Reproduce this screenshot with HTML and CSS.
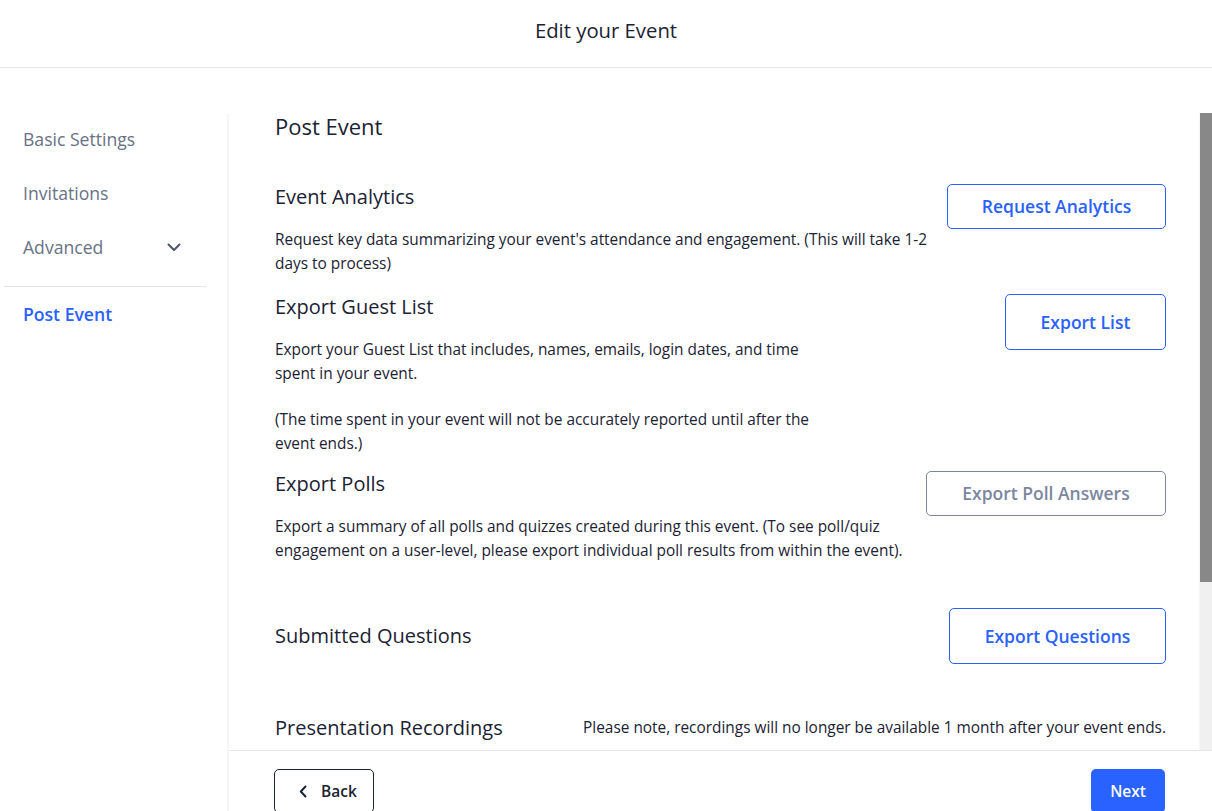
FILE: index.html
```html
<!DOCTYPE html>
<html lang="en">
<head>
<meta charset="utf-8">
<title>Edit your Event</title>
<link rel="stylesheet" href="styles.css">
</head>
<body>
<header class="topbar">
  <h1 class="topbar-title">Edit your Event</h1>
</header>
<div class="layout">
  <aside class="sidebar">
    <nav class="nav">
      <a class="nav-item">Basic Settings</a>
      <a class="nav-item">Invitations</a>
      <a class="nav-item nav-item-expand">Advanced
        <svg class="chev-down" width="14" height="9" viewBox="0 0 14 9"><polyline points="1.5,1.5 7,7 12.5,1.5" fill="none" stroke="#4b5468" stroke-width="2" stroke-linecap="round" stroke-linejoin="round"/></svg>
      </a>
      <div class="nav-divider"></div>
      <a class="nav-item nav-item-active">Post Event</a>
    </nav>
  </aside>
  <main class="main">
    <div class="scroll">
      <div class="scroll-content">
        <h2 class="page-title">Post Event</h2>

        <section class="row row-analytics">
          <div class="row-text">
            <h3 class="row-title">Event Analytics</h3>
            <p class="row-desc">Request key data summarizing your event's attendance and engagement. (This will take 1-2 days to process)</p>
          </div>
          <button class="btn btn-outline btn-short btn-analytics">Request Analytics</button>
        </section>

        <section class="row row-guests">
          <div class="row-text">
            <h3 class="row-title">Export Guest List</h3>
            <p class="row-desc narrow">Export your Guest List that includes, names, emails, login dates, and time spent in your event.</p>
            <p class="row-desc narrow gap">(The time spent in your event will not be accurately reported until after the event ends.)</p>
          </div>
          <button class="btn btn-outline btn-tall btn-list">Export List</button>
        </section>

        <section class="row row-polls">
          <div class="row-text">
            <h3 class="row-title">Export Polls</h3>
            <p class="row-desc">Export a summary of all polls and quizzes created during this event. (To see poll/quiz engagement on a user-level, please export individual poll results from within the event).</p>
          </div>
          <button class="btn btn-muted btn-short btn-polls">Export Poll Answers</button>
        </section>

        <section class="row row-center row-questions">
          <h3 class="row-title">Submitted Questions</h3>
          <button class="btn btn-outline btn-tall btn-questions">Export Questions</button>
        </section>

        <section class="row row-center row-recordings">
          <h3 class="row-title">Presentation Recordings</h3>
          <p class="note">Please note, recordings will no longer be available 1 month after your event ends.</p>
        </section>
      </div>
      <div class="scrollbar"><div class="scrollbar-thumb"></div></div>
    </div>
    <footer class="footer">
      <button class="btn btn-back">
        <svg class="chev-left" width="8" height="13" viewBox="0 0 8 13"><polyline points="6.5,1.5 1.8,6.5 6.5,11.5" fill="none" stroke="#1b2233" stroke-width="2" stroke-linecap="round" stroke-linejoin="round"/></svg>
        Back
      </button>
      <button class="btn btn-next">Next</button>
    </footer>
  </main>
</div>
</body>
</html>
```

FILE: styles.css
```css
* { box-sizing: border-box; }

html, body {
  margin: 0;
  padding: 0;
  height: 811px;
  overflow: hidden;
  background: #ffffff;
  font-family: "Open Sans", "Noto Sans", sans-serif;
  color: #1b2233;
}

.topbar {
  height: 68px;
  border-bottom: 1px solid #e4e4e4;
  display: flex;
  align-items: center;
  justify-content: center;
}

.topbar-title {
  margin: 0 0 8px 0;
  font-size: 20.3px;
  font-weight: 400;
  color: #1b2233;
}

.layout {
  display: flex;
  height: 743px;
}

.sidebar {
  width: 227px;
  flex-shrink: 0;
  padding-top: 44px;
}

.nav {
  margin-left: 4px;
  width: 202px;
  display: flex;
  flex-direction: column;
}

.nav-item {
  height: 54px;
  display: flex;
  align-items: center;
  justify-content: space-between;
  padding: 0 25px 0 19px;
  font-size: 17.6px;
  color: #687185;
}

.nav-divider {
  height: 1px;
  background: #e1e3e8;
  margin: 12px 0 0 0;
}

.nav-item-active {
  color: #2962ff;
  font-weight: 600;
}

.main {
  flex: 1;
  margin-top: 45px;
  border-left: 2px solid #f6f6f6;
  display: flex;
  flex-direction: column;
  min-width: 0;
}

.scroll {
  height: 637px;
  flex-shrink: 0;
  display: flex;
}

.scroll-content {
  flex: 1;
  min-width: 0;
  padding: 0 33px 0 46px;
  border-right: 1px solid #f7f7f7;
}

.scrollbar {
  width: 12px;
  flex-shrink: 0;
  background: #f0f0f0;
}

.scrollbar-thumb {
  height: 469px;
  background: #888888;
}

.page-title {
  margin: 0;
  font-size: 22px;
  line-height: 27px;
  font-weight: 400;
  color: #1b2233;
}

.row {
  display: flex;
  justify-content: space-between;
  align-items: flex-start;
  gap: 20px;
}

.row-center {
  align-items: center;
}

.row-analytics { margin-top: 44px; }
.row-guests { margin-top: 18px; }
.row-polls { margin-top: 15px; }
.row-questions { margin-top: 45px; }
.row-recordings { margin-top: 51px; }

.row-text {
  flex: 1;
  min-width: 0;
}

.row-title {
  margin: 0;
  font-size: 20px;
  line-height: 26px;
  font-weight: 400;
  color: #1b2233;
}

.row-desc {
  margin: 18px 0 0 0;
  font-size: 15.4px;
  line-height: 24px;
  color: #1b2233;
}

.row-desc.narrow { max-width: 560px; }
.row-desc.gap { margin-top: 22px; }

.note {
  margin: 0;
  font-size: 15.4px;
  line-height: 24px;
  color: #1b2233;
}

.btn {
  font-family: "Open Sans", "Noto Sans", sans-serif;
  font-size: 17.5px;
  font-weight: 600;
  border-radius: 5px;
  background: #ffffff;
  flex-shrink: 0;
  cursor: pointer;
  padding-bottom: 2px;
}

.btn-outline {
  border: 1px solid #2962ff;
  color: #2962ff;
}

.btn-muted {
  border: 1px solid #7c869f;
  color: #7c869f;
}

.btn-short { height: 45px; }
.btn-tall { height: 56px; }

.btn-analytics { width: 219px; }
.btn-list { width: 161px; }
.btn-polls { width: 240px; }
.btn-questions { width: 217px; }

.footer {
  border-top: 1px solid #e8e8e8;
  padding: 18px 47px 18px 45px;
  display: flex;
  justify-content: space-between;
  align-items: flex-start;
}

.btn-back {
  width: 100px;
  height: 44px;
  border: 1px solid #1b2233;
  color: #1b2233;
  display: flex;
  align-items: center;
  justify-content: center;
  gap: 14px;
  font-size: 15.5px;
  padding: 0 0 0 8px;
}

.btn-next {
  width: 74px;
  height: 44px;
  border: none;
  background: #2962ff;
  color: #ffffff;
  font-size: 15.5px;
}
```
